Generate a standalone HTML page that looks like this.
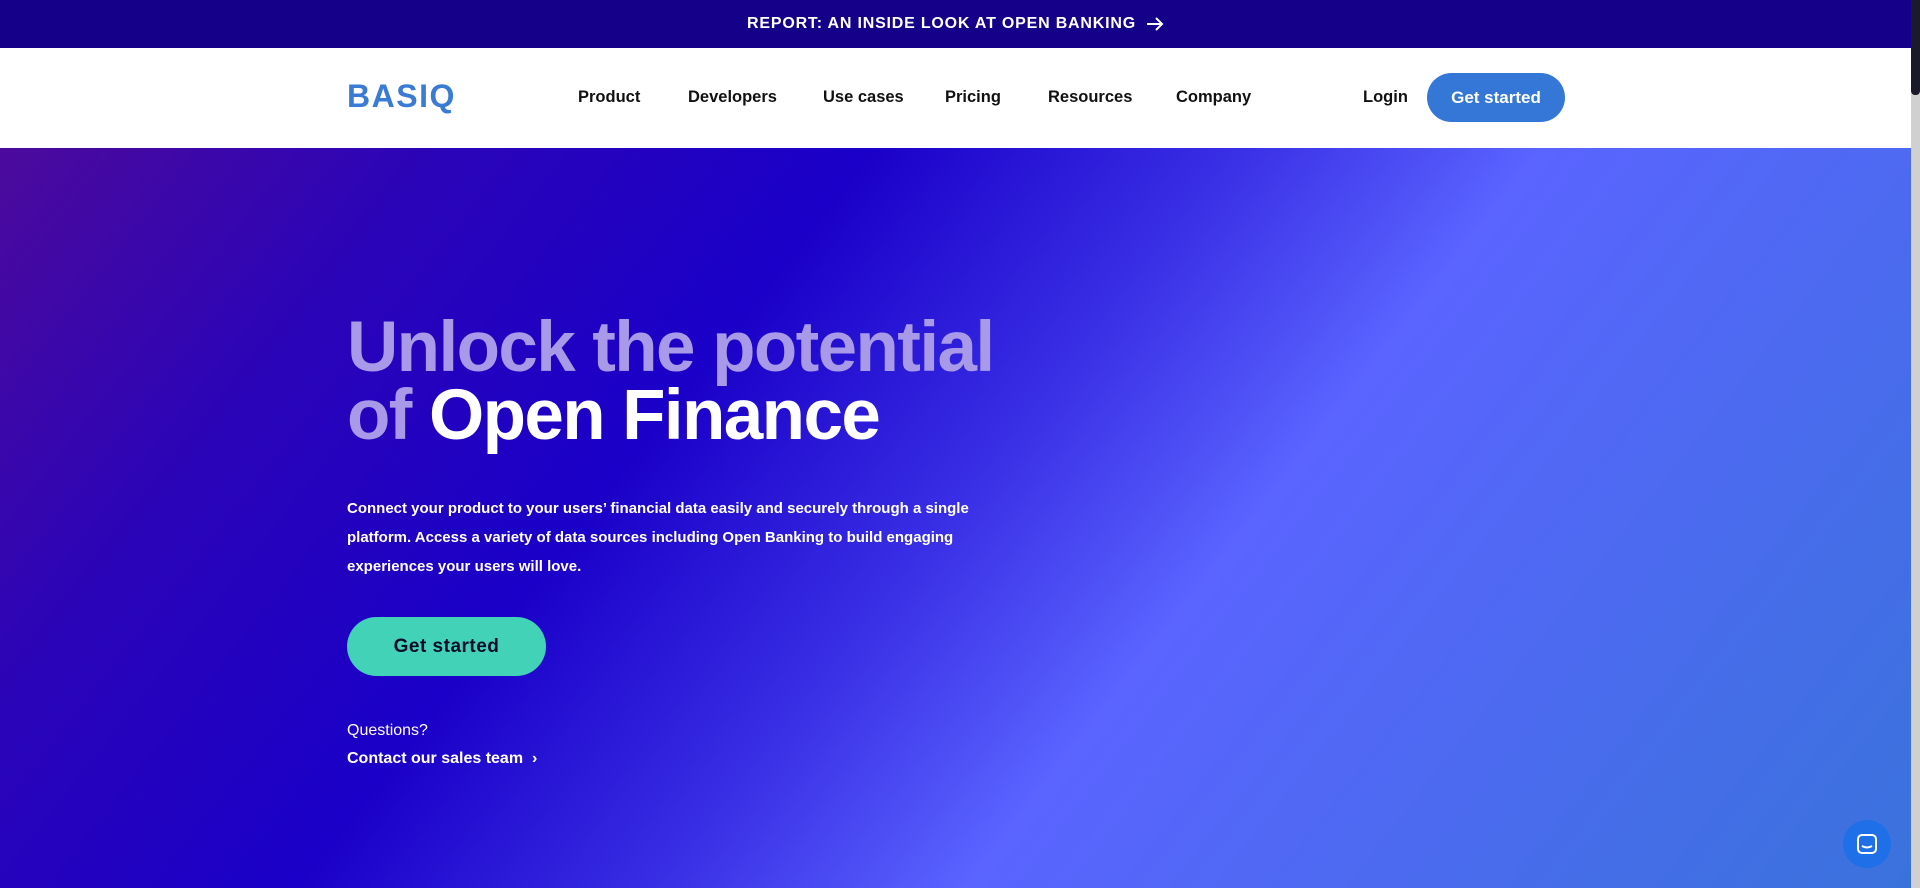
<!DOCTYPE html>
<html><head><meta charset="utf-8"><style>
*{margin:0;padding:0;box-sizing:border-box}
body{width:1920px;height:888px;overflow:hidden;font-family:"Liberation Sans",sans-serif;position:relative;background:#fff}
.banner{position:absolute;left:0;top:0;width:1911px;height:48px;background:#15008a;color:#fff;font-weight:bold;font-size:16px;letter-spacing:.8px;display:flex;align-items:center;justify-content:center}
.banner svg{margin-left:10px}
.nav{position:absolute;left:0;top:48px;width:1911px;height:100px;background:#fff}
.logo{position:absolute;left:347px;top:30px;font-size:32px;font-weight:bold;color:#3a7bd5;letter-spacing:1.5px}
.nav a{position:absolute;top:40px;font-size:16.5px;font-weight:bold;color:#111;text-decoration:none}
.btn1{position:absolute;left:1427px;top:25px;width:138px;height:49px;border-radius:25px;background:#3577d6;color:#fff;font-weight:bold;font-size:17px;display:flex;align-items:center;justify-content:center}
.hero{position:absolute;left:0;top:148px;width:1911px;height:740px;background:linear-gradient(128deg,#4c0a9c 0%,#2a04b8 18%,#1a00c8 35%,#3a30e6 50%,#5a64ff 62%,#4c6af0 78%,#3a72dc 100%)}
h1{position:absolute;left:347px;top:166px;font-size:71px;line-height:68px;letter-spacing:-1.6px;color:#a89ae8;font-weight:bold}
h1 span{color:#fff}
.p{position:absolute;left:347px;top:346px;font-size:15px;line-height:29px;color:#fff;font-weight:bold;white-space:nowrap}
.btn2{position:absolute;left:347px;top:469px;width:199px;height:59px;border-radius:30px;background:#42d2b8;color:#0a0a2a;font-weight:bold;font-size:19px;display:flex;align-items:center;justify-content:center;letter-spacing:.5px}
.q{position:absolute;left:347px;top:574px;color:#fff;font-size:16px}
.c{position:absolute;left:347px;top:602px;color:#fff;font-size:16px;font-weight:bold}
.chat{position:absolute;left:1843px;top:820px;width:48px;height:48px;border-radius:50%;background:#1e6fe8;display:flex;align-items:center;justify-content:center}
.sb{position:absolute;left:1911px;top:0;width:9px;height:888px;background:#d0d0d0}
.sb div{width:9px;height:95px;background:#1a1a2a;border-radius:0 0 4px 4px}
</style></head><body>
<div class="banner">REPORT: AN INSIDE LOOK AT OPEN BANKING<svg width="18" height="14" viewBox="0 0 18 14"><path d="M1 7H16M10 1L16 7L10 13" stroke="#fff" stroke-width="2" fill="none"/></svg></div>
<div class="nav">
<div class="logo">BASIQ</div>
<a style="left:578px">Product</a>
<a style="left:688px">Developers</a>
<a style="left:823px">Use cases</a>
<a style="left:945px">Pricing</a>
<a style="left:1048px">Resources</a>
<a style="left:1176px">Company</a>
<a style="left:1363px">Login</a>
<div class="btn1">Get started</div>
</div>
<div class="hero">
<h1>Unlock the potential<br>of <span>Open Finance</span></h1>
<div class="p">Connect your product to your users’ financial data easily and securely through a single<br>platform. Access a variety of data sources including Open Banking to build engaging<br>experiences your users will love.</div>
<div class="btn2">Get started</div>
<div class="q">Questions?</div>
<div class="c">Contact our sales team &nbsp;›</div>
</div>
<div class="chat"><svg width="22" height="22" viewBox="0 0 22 22"><rect x="2" y="2" width="18" height="18" rx="4" stroke="#fff" stroke-width="2" fill="none"/><path d="M6 13Q11 16 16 13" stroke="#fff" stroke-width="2" fill="none"/></svg></div>
<div class="sb"><div></div></div>
</body></html>
